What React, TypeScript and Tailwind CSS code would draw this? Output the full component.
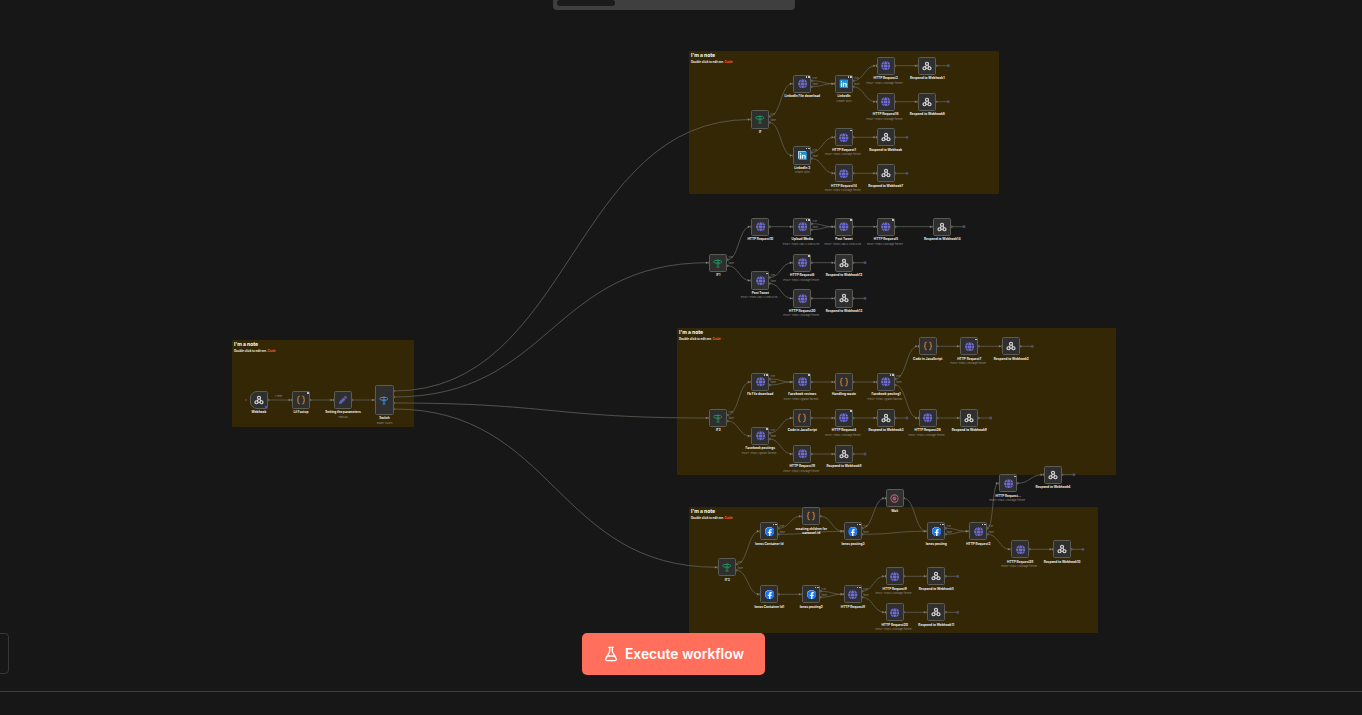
import { Fragment } from "react";
import { Braces, FlaskConical } from "lucide-react";
import { FaFacebook, FaGlobe, FaLinkedin, FaPen } from "react-icons/fa";

type Kind = "http" | "resp" | "if" | "switch" | "code" | "set" | "li" | "fb" | "wait" | "hook";
type N = {
  id: string; x: number; y: number; k: Kind; label?: string; sub?: string; outs?: number; badge?: number; stub?: number; tall?: boolean;
};

const POST_S = "POST: https://storage.fleshe...";
const POST_X = "POST: https://api.x.com/2/tw...";
const POST_F = "POST: https://graph.facebo...";

const nodes: N[] = [
  { id: "hook", x: 259, y: 400, k: "hook", label: "Webhook" },
  { id: "lil", x: 301, y: 400, k: "code", label: "Lil Fastup", badge: 1 },
  { id: "set", x: 343, y: 400, k: "set", label: "Setting the parameters", sub: "manual" },
  { id: "sw", x: 384.5, y: 400, k: "switch", label: "Switch", sub: "mode: Rules", tall: true },

  { id: "b0", x: 760.3, y: 119.5, k: "if", label: "IF", outs: 2 },
  { id: "b1", x: 802.3, y: 83.7, k: "http", label: "LinkedIn File download", outs: 2, badge: 2 },
  { id: "b2", x: 844, y: 83.7, k: "li", label: "LinkedIn", sub: "create: post", outs: 2, badge: 2 },
  { id: "b3", x: 885.7, y: 65.7, k: "http", label: "HTTP Request3", sub: POST_S },
  { id: "b4", x: 927.3, y: 65.7, k: "resp", label: "Respond to Webhook1", stub: 948.3 },
  { id: "b5", x: 885.7, y: 101.7, k: "http", label: "HTTP Request16", sub: POST_S },
  { id: "b6", x: 927.3, y: 101.7, k: "resp", label: "Respond to Webhook6", stub: 948.3 },
  { id: "b7", x: 802.3, y: 155.5, k: "li", label: "LinkedIn 2", sub: "create: post", outs: 2, badge: 2 },
  { id: "b8", x: 844, y: 137.3, k: "http", label: "HTTP Request1", sub: POST_S, badge: 1 },
  { id: "b9", x: 885.7, y: 137.3, k: "resp", label: "Respond to Webhook", stub: 907 },
  { id: "b10", x: 844, y: 173.3, k: "http", label: "HTTP Request14", sub: POST_S },
  { id: "b11", x: 885.7, y: 173.3, k: "resp", label: "Respond to Webhook7", stub: 907 },

  { id: "t0", x: 718.3, y: 262.7, k: "if", label: "IF1", outs: 2 },
  { id: "t1", x: 760.3, y: 226.7, k: "http", label: "HTTP Request10" },
  { id: "t2", x: 802.3, y: 226.7, k: "http", label: "Upload Media", sub: POST_X, outs: 2, badge: 2 },
  { id: "t3", x: 844, y: 226.7, k: "http", label: "Post Tweet", sub: POST_X, badge: 1 },
  { id: "t4", x: 886, y: 226.7, k: "http", label: "HTTP Request5", sub: POST_S, badge: 1 },
  { id: "t5", x: 942.3, y: 226.7, k: "resp", label: "Respond to Webhook14", stub: 964 },
  { id: "t6", x: 760.3, y: 280.5, k: "http", label: "Post Tweet", sub: POST_X, outs: 2, badge: 1 },
  { id: "t7", x: 802.3, y: 262.7, k: "http", label: "HTTP Request6", sub: POST_S, badge: 1 },
  { id: "t8", x: 844, y: 262.7, k: "resp", label: "Respond to Webhook12", stub: 865 },
  { id: "t9", x: 802.3, y: 298.4, k: "http", label: "HTTP Request30", sub: POST_S },
  { id: "t10", x: 844, y: 298.4, k: "resp", label: "Respond to Webhook13", stub: 865 },

  { id: "c0", x: 718.3, y: 418, k: "if", label: "IF2", outs: 2 },
  { id: "c1", x: 760.3, y: 382, k: "http", label: "Fb File download", outs: 2, badge: 2 },
  { id: "c2", x: 802.3, y: 382, k: "http", label: "Facebook reviews", sub: POST_F, badge: 1 },
  { id: "c3", x: 844, y: 382, k: "code", label: "Handling waste" },
  { id: "c4", x: 886, y: 382, k: "http", label: "Facebook posting1", sub: POST_F, outs: 2, badge: 2 },
  { id: "c5", x: 802.3, y: 418, k: "code", label: "Code in JavaScript" },
  { id: "c6", x: 844, y: 418, k: "http", label: "HTTP Request4", sub: POST_S, badge: 1 },
  { id: "c7", x: 886, y: 418, k: "resp", label: "Respond to Webhook3", stub: 907 },
  { id: "c8", x: 760.3, y: 436, k: "http", label: "Facebook postings", sub: POST_F, outs: 2, badge: 1 },
  { id: "c9", x: 802.3, y: 454, k: "http", label: "HTTP Request18", sub: POST_S },
  { id: "c10", x: 844, y: 454, k: "resp", label: "Respond to Webhook8", stub: 865 },
  { id: "c11", x: 927.7, y: 346.3, k: "code", label: "Code in JavaScript" },
  { id: "c12", x: 969.3, y: 346.3, k: "http", label: "HTTP Request7", sub: POST_S, badge: 1 },
  { id: "c13", x: 1011.3, y: 346.3, k: "resp", label: "Respond to Webhook2", stub: 1032.3 },
  { id: "c14", x: 927.7, y: 418, k: "http", label: "HTTP Request26", sub: POST_S },
  { id: "c15", x: 969.3, y: 418, k: "resp", label: "Respond to Webhook9", stub: 990.7 },

  { id: "d0", x: 727.3, y: 567.3, k: "if", label: "IF3", outs: 2 },
  { id: "d1", x: 769.3, y: 531.3, k: "fb", label: "Ionos Container Id", outs: 2, badge: 2 },
  { id: "d2", x: 811.3, y: 516.3, k: "code", label: "creating children for", sub: "carousel-id", outs: 1 },
  { id: "d3", x: 853, y: 531.3, k: "fb", label: "Ionos posting3", outs: 2, badge: 2 },
  { id: "d4", x: 894.7, y: 498.3, k: "wait", label: "Wait" },
  { id: "d5", x: 936.3, y: 531.3, k: "fb", label: "Ionos posting", outs: 2, badge: 2 },
  { id: "d6", x: 978.3, y: 531.3, k: "http", label: "HTTP Request2", outs: 2, badge: 2 },
  { id: "d7", x: 1008.3, y: 483.3, k: "http", label: "HTTP Request...", sub: POST_S, badge: 1 },
  { id: "d8", x: 1053, y: 474.7, k: "resp", label: "Respond to Webhook4", stub: 1074 },
  { id: "d9", x: 1020.3, y: 549.3, k: "http", label: "HTTP Request28", sub: POST_S },
  { id: "d10", x: 1062, y: 549.3, k: "resp", label: "Respond to Webhook10", stub: 1083 },
  { id: "d11", x: 769.3, y: 594.3, k: "fb", label: "Ionos Container Id1" },
  { id: "d12", x: 811.3, y: 594.3, k: "fb", label: "Ionos posting2", outs: 2, badge: 2 },
  { id: "d13", x: 853, y: 594.3, k: "http", label: "HTTP Request8", outs: 2, badge: 2 },
  { id: "d14", x: 894.7, y: 576.3, k: "http", label: "HTTP Request9", sub: POST_S },
  { id: "d15", x: 936.3, y: 576.3, k: "resp", label: "Respond to Webhook5", stub: 957.7 },
  { id: "d16", x: 894.7, y: 612.3, k: "http", label: "HTTP Request20", sub: POST_S },
  { id: "d17", x: 936.3, y: 612.3, k: "resp", label: "Respond to Webhook11", stub: 957.7 },
];

const edges: [string, number, string][] = [
  ["hook", 0, "lil"], ["lil", 0, "set"], ["set", 0, "sw"],
  ["sw", 0, "b0"], ["sw", 1, "t0"], ["sw", 2, "c0"], ["sw", 3, "d0"],
  ["b0", 0, "b1"], ["b0", 1, "b7"], ["b1", 0, "b2"], ["b1", 1, "b2"], ["b2", 0, "b3"], ["b2", 1, "b5"], ["b3", 0, "b4"], ["b5", 0, "b6"],
  ["b7", 0, "b8"], ["b7", 1, "b10"], ["b8", 0, "b9"], ["b10", 0, "b11"],
  ["t0", 0, "t1"], ["t0", 1, "t6"], ["t1", 0, "t2"], ["t2", 0, "t3"], ["t2", 1, "t3"], ["t3", 0, "t4"], ["t4", 0, "t5"],
  ["t6", 0, "t7"], ["t6", 1, "t9"], ["t7", 0, "t8"], ["t9", 0, "t10"],
  ["c0", 0, "c1"], ["c0", 1, "c8"], ["c1", 0, "c2"], ["c1", 1, "c2"], ["c2", 0, "c3"], ["c3", 0, "c4"], ["c4", 0, "c11"], ["c4", 1, "c14"],
  ["c11", 0, "c12"], ["c12", 0, "c13"], ["c14", 0, "c15"], ["c8", 0, "c5"], ["c8", 1, "c9"], ["c5", 0, "c6"], ["c6", 0, "c7"], ["c9", 0, "c10"],
  ["d0", 0, "d1"], ["d0", 1, "d11"], ["d1", 0, "d2"], ["d1", 1, "d3"], ["d2", 0, "d3"], ["d3", 0, "d4"], ["d3", 1, "d5"], ["d4", 0, "d5"],
  ["d5", 0, "d6"], ["d5", 1, "d6"], ["d6", 0, "d7"], ["d6", 1, "d9"], ["d7", 0, "d8"], ["d9", 0, "d10"],
  ["d11", 0, "d12"], ["d12", 0, "d13"], ["d12", 1, "d13"], ["d13", 0, "d14"], ["d13", 1, "d16"], ["d14", 0, "d15"], ["d16", 0, "d17"],
];

const notes = [
  { x: 232, y: 340, w: 182, h: 87 },
  { x: 689, y: 51, w: 310, h: 143 },
  { x: 677, y: 328, w: 439, h: 147 },
  { x: 689, y: 507, w: 409, h: 126 },
];

const H = 9.2;
const byId = Object.fromEntries(nodes.map((n) => [n.id, n]));

function outPos(n: N, i: number): [number, number] {
  if (n.tall) return [n.x + H, n.y - 9 + i * 6];
  if ((n.outs ?? 1) === 2) return [n.x + H, n.y + (i === 0 ? -3 : 3)];
  return [n.x + H, n.y];
}

function edgePath(x1: number, y1: number, x2: number, y2: number) {
  const c = Math.max((x2 - x1) * 0.5, 6);
  return `M${x1} ${y1} C${x1 + c} ${y1} ${x2 - c} ${y2} ${x2} ${y2}`;
}

function WebhookIcon() {
  return (
    <svg viewBox="0 0 20 20" className="h-[10px] w-[10px]" fill="none" stroke="#dcdcdc" strokeWidth="2.4">
      <circle cx="10" cy="5.5" r="3" />
      <circle cx="5" cy="14.5" r="3" />
      <circle cx="15" cy="14.5" r="3" />
      <path d="M9 8.5 6 12.5M8 14.5h4M11.5 8l2.5 4" />
    </svg>
  );
}

function SignIcon({ color }: { color: string }) {
  return (
    <svg viewBox="0 0 20 20" className="h-[10px] w-[10px]" fill="none" stroke={color} strokeWidth="2">
      <path d="M10 2v16M7 18h6" />
      <path d="M3 5h12l3 2.5-3 2.5H3L1.5 7.5z" />
      <path d="M6 11.5h8" />
    </svg>
  );
}

function Icon({ k }: { k: Kind }) {
  switch (k) {
    case "http":
      return <FaGlobe className="h-[9.5px] w-[9.5px] text-[#6f6bd6]" />;
    case "resp":
    case "hook":
      return <WebhookIcon />;
    case "if":
      return <SignIcon color="#1f8a5c" />;
    case "switch":
      return <SignIcon color="#3f86c9" />;
    case "code":
      return <Braces className="h-[10px] w-[10px] text-[#d9892c]" strokeWidth={2.4} />;
    case "set":
      return <FaPen className="h-[8px] w-[8px] text-[#5f63b8]" />;
    case "li":
      return (
        <span className="flex h-[8px] w-[8px] items-center justify-center rounded-[1px] bg-white">
          <FaLinkedin className="h-[9.5px] w-[9.5px] shrink-0 text-[#1c8fd0]" />
        </span>
      );
    case "fb":
      return (
        <span className="flex h-[8.5px] w-[8.5px] items-center justify-center rounded-full bg-white">
          <FaFacebook className="h-[9.5px] w-[9.5px] shrink-0 text-[#1877f2]" />
        </span>
      );
    case "wait":
      return (
        <svg viewBox="0 0 20 20" className="h-[9px] w-[9px]" fill="none" stroke="#b9566f" strokeWidth="2.4">
          <circle cx="10" cy="10" r="8" />
          <circle cx="10" cy="10" r="3" fill="#8f4a5c" />
        </svg>
      );
  }
}

function Node({ n }: { n: N }) {
  const h = n.tall ? 30 : 18.4;
  const w = 18.4;
  const lines = n.outs === 2;
  return (
    <div className="absolute" style={{ left: n.x - w / 2, top: n.y - h / 2, width: w, height: h }}>
      <div
        className={`flex h-full w-full items-center justify-center border-[0.8px] border-[#5c5c55] bg-[#2f2f2f] ${
          n.k === "hook" ? "rounded-l-[7px] rounded-r-[1.5px]" : "rounded-[1.6px]"
        }`}
      >
        <Icon k={n.k} />
      </div>
      {n.badge ? (
        <div className="absolute right-[1.5px] top-[1.5px] flex gap-[1px]">
          {Array.from({ length: n.badge }).map((_, i) => (
            <span key={i} className="h-[1.6px] w-[1.6px] rounded-[0.3px] bg-[#c8c8c8]" />
          ))}
        </div>
      ) : null}
      {n.k === "hook" ? <span className="absolute bottom-[1.5px] right-[1.5px] h-[2px] w-[2px] bg-[#5b4fd6]" /> : null}
      {n.label ? (
        <div className="absolute left-1/2 top-full mt-[2.2px] w-[60px] -translate-x-1/2 text-center text-[3.2px] leading-[3.9px] font-bold whitespace-nowrap text-[#ececec] font-['Inter',sans-serif]">
          {n.label}
          {n.sub ? (
            n.k === "code" ? (
              <div>{n.sub}</div>
            ) : (
              <div className="mt-[0.6px] text-[2.7px] leading-[3.4px] font-normal text-[#8e8e8e]">{n.sub}</div>
            )
          ) : null}
        </div>
      ) : null}
      {lines ? (
        <Fragment>
          <span className="absolute left-[19.5px] top-[3.6px] text-[2.3px] leading-[2.4px] text-[#8a8a8a] font-['Inter',sans-serif]">true</span>
          <span className="absolute left-[19.5px] top-[9.6px] text-[2.3px] leading-[2.4px] text-[#8a8a8a] font-['Inter',sans-serif]">false</span>
        </Fragment>
      ) : null}
    </div>
  );
}

export default function App() {
  return (
    <div className="flex h-screen w-screen flex-col overflow-hidden bg-[#171717] font-['Inter',sans-serif]">
      <div className="relative flex-1">
        {notes.map((o, i) => (
          <div key={i} className="absolute rounded-[1px] bg-[#342705] pl-[2px] pt-[1.2px]" style={{ left: o.x, top: o.y, width: o.w, height: o.h }}>
            <div className="text-[5px] leading-[6px] font-extrabold text-[#f0eee0]">I'm a note</div>
            <div className="mt-[2px] text-[2.9px] leading-[5px] font-bold text-[#f0eee0]">
              Double click to edit me. <span className="text-[#ff5a2a]">Guide</span>
            </div>
          </div>
        ))}

        <svg className="absolute left-0 top-0 h-[691px] w-[1362px]" viewBox="0 0 1362 691" fill="none">
          {edges.map(([a, i, b], idx) => {
            const [x1, y1] = outPos(byId[a], i);
            const t = byId[b];
            const x2 = t.x - H;
            const y2 = t.y;
            return (
              <g key={idx}>
                <path d={edgePath(x1, y1, x2 - 1, y2)} stroke="#64645e" strokeWidth="0.75" />
                <path d={`M${x2 - 3.2} ${y2 - 1.2} L${x2 - 1} ${y2} L${x2 - 3.2} ${y2 + 1.2}Z`} fill="#85857f" />
              </g>
            );
          })}
          {nodes.map((n) => {
            const count = n.tall ? 4 : n.outs ?? 1;
            return (
              <g key={n.id}>
                {n.k !== "hook" ? <rect x={n.x - H - 0.6} y={n.y - 1.2} width="1.2" height="2.4" fill="#7a7a74" /> : <circle cx={n.x - H - 4} cy={n.y} r="0.8" fill="#b0453a" />}
                {n.stub ? (
                  <g>
                    <path d={`M${n.x + H} ${n.y} H${n.stub}`} stroke="#64645e" strokeWidth="0.75" />
                    <rect x={n.stub - 1.4} y={n.y - 1.4} width="2.8" height="2.8" rx="1" fill="#4d4d70" />
                  </g>
                ) : null}
                {Array.from({ length: count }).map((_, i) => {
                  const [x, y] = outPos(n, i);
                  return <circle key={i} cx={x} cy={y} r="1.3" fill="#5f5f5a" />;
                })}
              </g>
            );
          })}
        </svg>

        {nodes.map((n) => (
          <Node key={n.id} n={n} />
        ))}

        <div className="absolute left-[275px] top-[395px] text-[2.6px] leading-[3px] text-[#8f93c8]">1 item</div>

        <div className="absolute left-[553px] top-[-4px] h-[14px] w-[242px] rounded-[4px] bg-[#3f3f3f] p-[4px]">
          <div className="h-[6px] w-[58px] rounded-[3px] bg-[#1b1b1b]" />
        </div>

        <div className="absolute left-[-10px] top-[633px] h-[41px] w-[19px] rounded-[4px] border border-[#383838]" />

        <button className="absolute left-[582px] top-[633px] flex h-[42px] w-[183px] items-center justify-center gap-[6px] rounded-[5px] bg-[#ff6f5c] text-[13.8px] font-semibold text-white">
          <FlaskConical className="h-[16px] w-[16px]" strokeWidth={2} />
          Execute workflow
        </button>
      </div>
      <div className="h-[24px] shrink-0 border-t border-[#3d3d3d] bg-[#171717]" />
    </div>
  );
}
